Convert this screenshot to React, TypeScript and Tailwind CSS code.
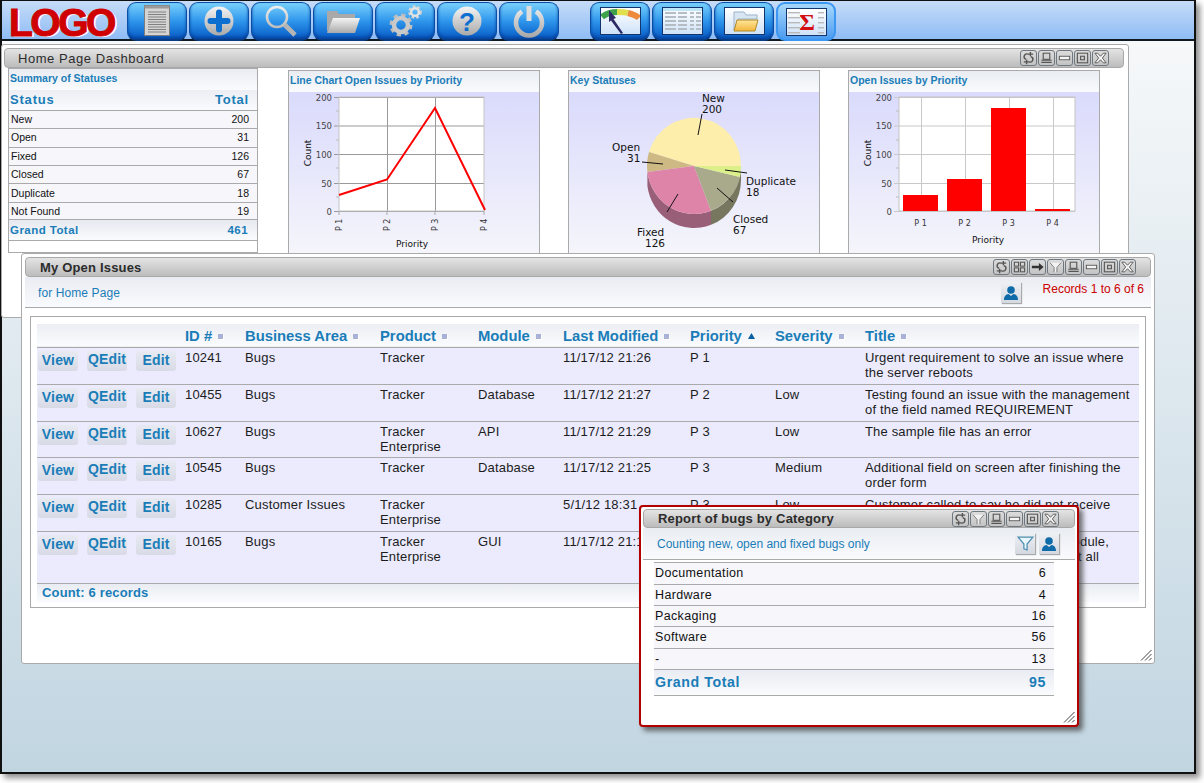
import type { ReactNode } from "react";

const ARIAL = "font-['Liberation_Sans',Arial,sans-serif]";

function SharedDefs() {
  return (
    <svg className="absolute h-0 w-0" aria-hidden="true">
      <defs>
        <linearGradient id="chrome" x1="0" y1="0" x2="0" y2="1">
          <stop offset="0" stopColor="#f4f4f4" />
          <stop offset="1" stopColor="#a9a9a9" />
        </linearGradient>
        <linearGradient id="chromeFlat" gradientUnits="userSpaceOnUse" x1="0" y1="0" x2="0" y2="34">
          <stop offset="0" stopColor="#f4f4f4" />
          <stop offset="1" stopColor="#a5a5a5" />
        </linearGradient>
        <linearGradient id="folderYellow" x1="0" y1="0" x2="0" y2="1">
          <stop offset="0" stopColor="#ffe79a" />
          <stop offset="1" stopColor="#f2b63c" />
        </linearGradient>
      </defs>
    </svg>
  );
}

function DocIcon() {
  return (
    <svg width="36" height="34" viewBox="0 0 36 34">
      <rect x="5.5" y="1.5" width="25" height="30" fill="#d4d4d4" stroke="#7d7d7d" />
      <rect x="5.5" y="1.5" width="25" height="3" fill="#9a9a9a" />
      {[8, 10.5, 13, 15.5, 18, 20.5, 23, 25.5, 28].map((y) => (
        <line key={y} x1="9" x2="27" y1={y} y2={y} stroke="#808080" strokeWidth="1" />
      ))}
    </svg>
  );
}

function PlusIcon() {
  return (
    <svg width="36" height="34" viewBox="0 0 36 34">
      <circle cx="18" cy="17" r="14.5" fill="url(#chrome)" />
      <path d="M18 8.500v17M9.500 17h17" stroke="#0d6fd0" strokeWidth="6" strokeLinecap="round" />
    </svg>
  );
}

function SearchIcon() {
  return (
    <svg width="36" height="34" viewBox="0 0 36 34">
      <circle cx="14" cy="13" r="10" fill="none" stroke="url(#chromeFlat)" strokeWidth="2.6" />
      <line x1="21.5" y1="20.5" x2="32" y2="31" stroke="#b5b5b5" strokeWidth="4.6" />
    </svg>
  );
}

function FolderIcon() {
  return (
    <svg width="36" height="34" viewBox="0 0 36 34">
      <path d="M2 28V7h10l2 3h16v4H9z" fill="#a9a9a9" />
      <path d="M2 29l6-15h27l-5 15z" fill="url(#chrome)" />
    </svg>
  );
}

function GearsIcon() {
  return (
    <svg width="36" height="34" viewBox="0 0 36 34">
      <circle cx="14" cy="21" r="9.500" fill="none" stroke="#bdbdbd" strokeWidth="4" strokeDasharray="4 3.450" />
      <circle cx="14" cy="21" r="7" fill="none" stroke="#c9c9c9" strokeWidth="4.500" />
      <circle cx="28" cy="8" r="5.500" fill="none" stroke="#d6d6d6" strokeWidth="2.600" strokeDasharray="2.600 2" />
      <circle cx="28" cy="8" r="3.800" fill="none" stroke="#e4e4e4" strokeWidth="2.400" />
    </svg>
  );
}

function HelpIcon() {
  return (
    <svg width="36" height="34" viewBox="0 0 36 34">
      <circle cx="18" cy="17" r="14.5" fill="url(#chrome)" />
      <text x="18" y="26.500" textAnchor="middle" fontFamily="'Liberation Sans',sans-serif" fontWeight="700" fontSize="26" fill="#0d6fd0">
        ?
      </text>
    </svg>
  );
}

function PowerIcon() {
  return (
    <svg width="36" height="34" viewBox="0 0 36 34">
      <path d="M11 7.500a13 13 0 1 0 14 0" fill="none" stroke="url(#chromeFlat)" strokeWidth="4.600" />
      <rect x="15.500" y="2" width="5" height="15" fill="#ddd" />
    </svg>
  );
}

function GaugeIcon() {
  return (
    <svg width="39" height="26" viewBox="0 0 39 26">
      <path d="M1 9C6 5 11 4 16 4" fill="none" stroke="#3fa24a" strokeWidth="6" />
      <path d="M16 4c4 0 8 0 11 1" fill="none" stroke="#dfe04c" strokeWidth="6" />
      <path d="M27 5c4 1 8 2 11 5" fill="none" stroke="#ee8a3c" strokeWidth="6" />
      <path d="M8 2l7 8-2.500 1L22 25l-2 1-10-13.500-2 1.500z" fill="#2d2a66" />
    </svg>
  );
}

function GridIcon() {
  const rows = [3, 7, 11, 15, 19];
  return (
    <svg width="39" height="26" viewBox="0 0 39 26">
      <rect x="0" y="0" width="39" height="3" fill="#bfe6f6" />
      {rows.map((y) => (
        <g key={y} fill="#b4bcc4">
          <rect x="2" y={y + 1} width="11" height="2" />
          <rect x="15" y={y + 1} width="9" height="2" />
          <rect x="27" y={y + 1} width="4" height="2" />
          <rect x="33" y={y + 1} width="5" height="2" />
        </g>
      ))}
    </svg>
  );
}

function YellowFolderIcon() {
  return (
    <svg width="39" height="26" viewBox="0 0 39 26">
      <path d="M9 22V4h10l2 3h11v4H13z" fill="#d8e6f4" stroke="#9db4c8" />
      <path d="M9 23l3-11h21l-3 11z" fill="url(#folderYellow)" stroke="#b08a2a" />
    </svg>
  );
}

function SigmaIcon() {
  return (
    <svg width="39" height="26" viewBox="0 0 39 26">
      {[3, 8, 13, 18, 23].map((y) => (
        <g key={y}>
          <rect x="1" y={y} width="12" height="1.400" fill="#b9b9b9" />
          <rect x="31" y={y} width="6" height="1.400" fill="#b9b9b9" />
        </g>
      ))}
      <text x="20" y="21" textAnchor="middle" fontFamily="'Liberation Serif',serif" fontWeight="700" fontSize="24" fill="#d40d12">
        Σ
      </text>
    </svg>
  );
}

function ToolButton({ children, active }: { children: ReactNode; active?: boolean }) {
  return (
    <div
      className={
        active
          ? "flex h-[39px] w-[60px] items-center justify-center rounded-[9px] border-2 border-[#3b97f2] bg-gradient-to-b from-[#a6d8fb] to-[#4a9bf0]"
          : "flex h-[39px] w-[60px] items-center justify-center rounded-[9px] border border-b-2 border-[#0a4ea6] border-b-[#083d86] bg-gradient-to-b from-[#77d0fb] via-[#2e96ec] to-[#0759c4] shadow-[inset_0_-2px_3px_#07459f]"
      }
    >
      {children}
    </div>
  );
}

function FramedIcon({ children }: { children: ReactNode }) {
  return (
    <div className="flex h-[28px] w-[41px] items-center justify-center border border-[#14356b] bg-gradient-to-b from-white to-[#cfe2f8]">
      {children}
    </div>
  );
}

function Toolbar() {
  return (
    <header className="flex h-[40px] shrink-0 items-start border-b-2 border-[#101820] bg-gradient-to-b from-[#c6dcf8] to-[#8fbcf5] pl-[7px] pt-[1px]">
      <div className={`${ARIAL} mt-[1px] w-[115px] text-[39px] leading-[39px] font-bold tracking-[-2.500px] whitespace-nowrap text-[#d00000] [-webkit-text-stroke:1px_#d00000] [text-shadow:2px_1px_0_#fff]`}>
        LOGO
      </div>
      <div className="ml-[3px] flex gap-[2px]">
        <ToolButton><DocIcon /></ToolButton>
        <ToolButton><PlusIcon /></ToolButton>
        <ToolButton><SearchIcon /></ToolButton>
        <ToolButton><FolderIcon /></ToolButton>
        <ToolButton><GearsIcon /></ToolButton>
        <ToolButton><HelpIcon /></ToolButton>
        <ToolButton><PowerIcon /></ToolButton>
      </div>
      <div className="ml-[31px] flex gap-[2px]">
        <ToolButton><FramedIcon><GaugeIcon /></FramedIcon></ToolButton>
        <ToolButton><FramedIcon><GridIcon /></FramedIcon></ToolButton>
        <ToolButton><FramedIcon><YellowFolderIcon /></FramedIcon></ToolButton>
        <ToolButton active><FramedIcon><SigmaIcon /></FramedIcon></ToolButton>
      </div>
    </header>
  );
}

type WinIcon = "refresh" | "grid" | "arrow" | "filter" | "print" | "min" | "max" | "close";

function WinGlyph({ name }: { name: WinIcon }) {
  const stroke = "#555";
  switch (name) {
    case "refresh":
      return (
        <g fill="none" stroke={stroke} strokeWidth="1.500">
          <path d="M13 3.500H7.500a3 3 0 0 0-2 6" />
          <path d="M3 12.500h5.500a3 3 0 0 0 2-6" />
          <path d="M10 1v5M6 10v5" />
        </g>
      );
    case "grid":
      return (
        <g fill="none" stroke={stroke} strokeWidth="1.200">
          <rect x="2.500" y="2.500" width="4.500" height="4.500" />
          <rect x="9" y="2.500" width="4.500" height="4.500" />
          <rect x="2.500" y="9" width="4.500" height="4.500" />
          <rect x="9" y="9" width="4.500" height="4.500" />
        </g>
      );
    case "arrow":
      return <path d="M2 6.500h7.500V3.500L14.500 8l-5 4.500v-3H2z" fill="#333" />;
    case "filter":
      return (
        <g>
          <path d="M2 3h12L9.500 8.500V14h-3V8.500z" fill="#f2f2f2" />
          <path d="M2 3l4.500 5.500V14M14 3L9.500 8.500V14" fill="none" stroke="#777" />
        </g>
      );
    case "print":
      return (
        <g fill="none" stroke={stroke} strokeWidth="1.200">
          <rect x="4.500" y="2.500" width="7" height="7" />
          <path d="M2.500 10.500h11M2.500 13h11" />
        </g>
      );
    case "min":
      return <rect x="2.500" y="6" width="11" height="4" fill="#f4f4f4" stroke={stroke} strokeWidth="1" />;
    case "max":
      return (
        <g fill="none" stroke={stroke} strokeWidth="1.200">
          <rect x="2.500" y="2.500" width="11" height="11" />
          <rect x="6" y="6" width="4" height="4" />
        </g>
      );
    case "close":
      return (
        <path d="M2 2.500h3L8 6l3-3.500h3L10 8l4 5.500h-3L8 10l-3 3.500H2L6 8z" fill="#f4f4f4" stroke={stroke} strokeWidth="1" />
      );
  }
}

function WinButton({ name }: { name: WinIcon }) {
  return (
    <div className="h-[16px] w-[17px] rounded-[3px] border border-[#6f7880] bg-gradient-to-b from-[#dcdcdc] to-[#c4c4c4]">
      <svg width="15" height="14" viewBox="0 0 16 16" preserveAspectRatio="none">
        <WinGlyph name={name} />
      </svg>
    </div>
  );
}

function TitleBar({ title, bold, icons, right }: { title: string; bold?: boolean; icons: WinIcon[]; right: string }) {
  return (
    <div className={`flex items-center rounded-[4px] border border-[#a8a8a8] bg-gradient-to-b from-[#e4e4e4] to-[#bcbcbc] ${right}`}>
      <span className={`${ARIAL} flex-1 text-[13px] leading-[15px] text-[#2c2c2c] ${bold ? "font-bold tracking-[0.18px]" : "font-normal tracking-[0.55px]"}`}>
        {title}
      </span>
      <div className="flex gap-px">
        {icons.map((n) => (
          <WinButton key={n} name={n} />
        ))}
      </div>
    </div>
  );
}

function ResizeGrip() {
  return (
    <svg className="absolute right-[2px] bottom-[2px]" width="12" height="12" viewBox="0 0 12 12">
      <path d="M1 11.500L11.500 1M5 11.500L11.500 5M9 11.500L11.500 9" stroke="#444" strokeWidth="1" />
    </svg>
  );
}

function SortMark() {
  return <span className="ml-[6px] inline-block h-[5px] w-[5px] bg-[#a9b2d6] align-[2px] shadow-[1px_1px_0_#fff]" />;
}

function SortAsc() {
  return (
    <svg className="ml-[6px] inline-block align-[2px]" width="7" height="6" viewBox="0 0 7 6">
      <path d="M3.500 0L7 6H0z" fill="#0b5f9e" />
    </svg>
  );
}

function FilterTile() {
  return (
    <div className="flex h-[21px] w-[20px] items-center justify-center bg-gradient-to-b from-[#eef0f4] to-[#d4d8e0] shadow-[1px_1px_1px_#aaa]">
      <svg width="17" height="17" viewBox="0 0 16 16">
        <path d="M1 2h14L9.500 8.500V14l-3-1V8.500z" fill="#e9f6fb" stroke="#4f8fb0" strokeWidth="1.200" />
      </svg>
    </div>
  );
}

function UserTile() {
  return (
    <div className="flex h-[21px] w-[20px] items-center justify-center bg-gradient-to-b from-[#eef0f4] to-[#d4d8e0] shadow-[1px_1px_1px_#aaa]">
      <svg width="16" height="16" viewBox="0 0 16 16">
        <circle cx="8" cy="5" r="3.800" fill="#0e6aa8" />
        <path d="M1 15c0-4 2-5.500 4.500-6L8 11l2.500-2c2.500.5 4.500 2 4.500 6z" fill="#0e6aa8" />
      </svg>
    </div>
  );
}

const summaryRows: [string, number, string][] = [
  ["New", 200, "h-[18px]"],
  ["Open", 31, "h-[19px]"],
  ["Fixed", 126, "h-[18px]"],
  ["Closed", 67, "h-[18px]"],
  ["Duplicate", 18, "h-[19px] pt-[1px]"],
  ["Not Found", 19, "h-[17px] pt-[1px]"],
];

function SummaryPanel() {
  return (
    <div className={`${ARIAL} h-[185px] w-[250px] shrink-0 border border-[#aaa] bg-white`}>
      <div className="flex h-[21px] items-center bg-gradient-to-b from-[#e9ecf2] to-[#fafbfd] pb-[2px] pl-[1px] text-[10.500px] font-bold text-[#1a7db8]">
        Summary of Statuses
      </div>
      <div className="flex h-[21px] items-center justify-between border-b border-[#aaa] bg-gradient-to-b from-[#eceef4] to-[#fafbfd] pr-[8px] pl-[1px] text-[13px] font-bold tracking-[0.8px] text-[#1a7db8]">
        <span>Status</span>
        <span>Total</span>
      </div>
      {summaryRows.map(([label, n, h]) => (
        <div key={label} className={`flex ${h} items-center justify-between border-b border-[#aaa] bg-[#f6f6fb] pr-[8px] pl-[2px] text-[10.500px] text-[#111]`}>
          <span>{label}</span>
          <span>{n}</span>
        </div>
      ))}
      <div className="flex h-[21px] items-center justify-between border-b border-[#aaa] bg-gradient-to-b from-[#e6e9f0] to-[#fafbfd] pt-[2px] pr-[9px] pl-[1px] text-[11.500px] font-bold tracking-[0.45px] text-[#1a7db8]">
        <span>Grand Total</span>
        <span>461</span>
      </div>
    </div>
  );
}

function ChartPanel({ title, children }: { title: string; children: ReactNode }) {
  return (
    <div className={`${ARIAL} mt-[2px] h-[183px] w-[252px] shrink-0 border border-[#aaa]`}>
      <div className="flex h-[21px] items-center bg-gradient-to-b from-[#e9ecf2] to-[#fafbfd] pb-[2px] pl-[1px] text-[10.500px] font-bold text-[#1a7db8]">
        {title}
      </div>
      <div className="h-[161px] bg-gradient-to-b from-[#dadafc] to-[#f5f5fb]">{children}</div>
    </div>
  );
}

const axisFont = "'DejaVu Sans',sans-serif";

function Axes({ left, right, vlines, grid }: { left: number; right: number; vlines: number[]; grid: string }) {
  const ys: [number, string][] = [[97, "200"], [125.5, "150"], [154, "100"], [183, "50"], [211, "0"]];
  return (
    <g>
      <rect x={left} y="97" width={right - left} height="114" fill="#fff" />
      {ys.map(([y, t]) => (
        <g key={t}>
          <line x1={left - 5} x2={right} y1={y + 0.5} y2={y + 0.5} stroke={grid} />
          <text x={left - 7} y={y + 3.5} textAnchor="end" fontFamily={axisFont} fontSize="8.500" fill="#444">
            {t}
          </text>
        </g>
      ))}
      {[111, 140, 168, 197].map((y) => (
        <line key={y} x1={left - 3} x2={left} y1={y} y2={y} stroke="#bbb" />
      ))}
      {vlines.map((x) => (
        <line key={x} x1={x + 0.5} x2={x + 0.5} y1="97" y2="211" stroke={grid} />
      ))}
      <rect x={left} y="97" width={right - left} height="114" fill="none" stroke="#c4c4c4" />
      <text transform={`translate(${left - 28},153) rotate(-90)`} textAnchor="middle" fontFamily={axisFont} fontSize="9" fill="#111">
        Count
      </text>
    </g>
  );
}

function LineChart() {
  return (
    <svg width="250" height="161" viewBox="289 92 250 161">
      <Axes left={339} right={484} vlines={[387, 435]} grid="#999" />
      {[339, 387, 435, 484].map((x, i) => (
        <g key={x}>
          <line x1={x} x2={x} y1="211" y2="215" stroke="#aaa" />
          <text transform={`translate(${x + 3},231) rotate(-90)`} fontFamily={axisFont} fontSize="8" fill="#333">
            {`P ${i + 1}`}
          </text>
        </g>
      ))}
      <polyline points="339,195 387,179.500 435,108 485,210" fill="none" stroke="#f00" strokeWidth="2" />
      <text x="412" y="247" textAnchor="middle" fontFamily={axisFont} fontSize="9" fill="#111">
        Priority
      </text>
    </svg>
  );
}

function BarChart() {
  const bars = [[903, 195], [947, 179], [991, 108], [1035, 209]];
  return (
    <svg width="250" height="161" viewBox="849 92 250 161">
      <Axes left={899} right={1075} vlines={[921, 965, 1009, 1053]} grid="#c8c8c8" />
      {bars.map(([x, y], i) => (
        <g key={x}>
          <rect x={x} y={y} width="35" height={211 - y} fill="#f00" />
          <text x={x + 17.5} y="226" textAnchor="middle" fontFamily={axisFont} fontSize="8" fill="#333">
            {`P ${i + 1}`}
          </text>
        </g>
      ))}
      <text x="988" y="243" textAnchor="middle" fontFamily={axisFont} fontSize="9" fill="#111">
        Priority
      </text>
    </svg>
  );
}

function PieChart() {
  const label = { fontFamily: axisFont, fontSize: 10.5, fill: "#111" };
  return (
    <svg width="250" height="161" viewBox="569 92 250 161">
      <path d="M647.400 172A47 48 0 0 0 711 210.800V224.800A47 48 0 0 1 647.400 186z" fill="#9a5f78" />
      <path d="M711 210.800A47 48 0 0 0 741 166V180A47 48 0 0 1 711 224.800z" fill="#77775f" />
      <path d="M694 166L741 166A47 48 0 0 0 649 152z" fill="#fdeeab" />
      <path d="M694 166L649 152A47 48 0 0 0 647.400 172z" fill="#ceb985" />
      <path d="M694 166L647.400 172A47 48 0 0 0 711 210.800z" fill="#de84a9" />
      <path d="M694 166L711 210.800A47 48 0 0 0 740 177z" fill="#a9a98b" />
      <path d="M694 166L740 177A47 48 0 0 0 741 166z" fill="#dcf08a" />
      <g stroke="#111" strokeWidth="1" fill="none">
        <path d="M702 114l-4 21" />
        <path d="M642 162l21 2" />
        <path d="M725 170l22 3" />
        <path d="M717 188l16 14" />
        <path d="M678 194l-11 18" />
      </g>
      <text x="702" y="102" {...label}>New</text>
      <text x="702" y="113" {...label}>200</text>
      <text x="612" y="151" {...label}>Open</text>
      <text x="627" y="162" {...label}>31</text>
      <text x="746" y="185" {...label}>Duplicate</text>
      <text x="746" y="196" {...label}>18</text>
      <text x="733" y="223" {...label}>Closed</text>
      <text x="733" y="234" {...label}>67</text>
      <text x="637" y="236" {...label}>Fixed</text>
      <text x="645" y="247" {...label}>126</text>
    </svg>
  );
}

type Issue = {
  id: string;
  area: string;
  product: string;
  module: string;
  modified: string;
  priority: string;
  severity: string;
  title: ReactNode;
  h: string;
};

const issues: Issue[] = [
  { id: "10241", area: "Bugs", product: "Tracker", module: "", modified: "11/17/12 21:26", priority: "P 1", severity: "", title: "Urgent requirement to solve an issue where the server reboots", h: "h-[37px]" },
  { id: "10455", area: "Bugs", product: "Tracker", module: "Database", modified: "11/17/12 21:27", priority: "P 2", severity: "Low", title: "Testing found an issue with the management of the field named REQUIREMENT", h: "h-[37px]" },
  { id: "10627", area: "Bugs", product: "Tracker Enterprise", module: "API", modified: "11/17/12 21:29", priority: "P 3", severity: "Low", title: "The sample file has an error", h: "h-[36px]" },
  { id: "10545", area: "Bugs", product: "Tracker", module: "Database", modified: "11/17/12 21:25", priority: "P 3", severity: "Medium", title: "Additional field on screen after finishing the order form", h: "h-[37px]" },
  { id: "10285", area: "Customer Issues", product: "Tracker Enterprise", module: "", modified: "5/1/12 18:31", priority: "P 3", severity: "Low", title: "Customer called to say he did not receive", h: "h-[37px]" },
  { id: "10165", area: "Bugs", product: "Tracker Enterprise", module: "GUI", modified: "11/17/12 21:18", priority: "", severity: "", title: <>Window freezes when opening a module,<br />and the user must restart to review it all</>, h: "h-[52px]" },
];

const cols = ["w-[148px]", "w-[60px]", "w-[135px]", "w-[98px]", "w-[85px]", "w-[127px]", "w-[85px]", "w-[90px]", "w-[274px]"];

function ActionButton({ label, className }: { label: string; className?: string }) {
  return (
    <span className={`flex h-[20px] w-[40px] items-center justify-center rounded-[3px] bg-gradient-to-b from-[#e8eaf2] to-[#d8dbe6] text-[14px] font-bold tracking-[0.15px] text-[#1a7db8] ${className ?? ""}`}>
      {label}
    </span>
  );
}

function HeadCell({ label, mark }: { label: string; mark: ReactNode }) {
  return (
    <th className="p-0 pt-[2px] text-left text-[14.800px] leading-none font-bold whitespace-nowrap text-[#1a7db8]">
      {label}
      {mark}
    </th>
  );
}

function IssuesTable() {
  return (
    <div className={`${ARIAL} mx-[8px] mt-[8px] h-[292px] border border-[#aaa] bg-white px-[6px] pt-[7px]`}>
      <table className="w-[1102px] table-fixed border-collapse">
        <colgroup>
          {cols.map((c, i) => (
            <col key={i} className={c} />
          ))}
        </colgroup>
        <thead>
          <tr className="h-[23px] border-b border-[#aaa] bg-gradient-to-b from-[#eceef4] to-[#fafbfd]">
            <th />
            <HeadCell label="ID #" mark={<SortMark />} />
            <HeadCell label="Business Area" mark={<SortMark />} />
            <HeadCell label="Product" mark={<SortMark />} />
            <HeadCell label="Module" mark={<SortMark />} />
            <HeadCell label="Last Modified" mark={<SortMark />} />
            <HeadCell label="Priority" mark={<SortAsc />} />
            <HeadCell label="Severity" mark={<SortMark />} />
            <HeadCell label="Title" mark={<SortMark />} />
          </tr>
        </thead>
        <tbody>
          {issues.map((r) => (
            <tr key={r.id} className={`${r.h} border-b border-[#aaa] bg-[#ebebfd] align-top text-[13px] leading-[15.500px] tracking-[0.17px] text-[#1c1c1c]`}>
              <td className="p-0 pt-[3px] pl-[1px]">
                <div className="flex gap-[9px]">
                  <ActionButton label="View" />
                  <ActionButton label="QEdit" className="pb-[2px]" />
                  <ActionButton label="Edit" />
                </div>
              </td>
              <td className="p-0 pt-[2px]">{r.id}</td>
              <td className="p-0 pt-[2px]">{r.area}</td>
              <td className="p-0 pt-[2px]">{r.product}</td>
              <td className="p-0 pt-[2px]">{r.module}</td>
              <td className="p-0 pt-[2px]">{r.modified}</td>
              <td className="p-0 pt-[2px]">{r.priority}</td>
              <td className="p-0 pt-[2px]">{r.severity}</td>
              <td className="p-0 pt-[2px]">{r.title}</td>
            </tr>
          ))}
        </tbody>
      </table>
      <div className="flex h-[18px] w-[1102px] items-center bg-gradient-to-b from-[#e9ecf2] to-[#fafbfd] pl-[5px] text-[13px] font-bold tracking-[0.15px] text-[#1a7db8]">
        Count: 6 records
      </div>
    </div>
  );
}

const reportRows: [string, number, string][] = [
  ["Documentation", 6, "h-[22px]"],
  ["Hardware", 4, "h-[21px]"],
  ["Packaging", 16, "h-[21px]"],
  ["Software", 56, "h-[22px]"],
  ["-", 13, "h-[21px]"],
];

function ReportWindow() {
  return (
    <section className={`${ARIAL} absolute top-[505px] left-[639px] h-[222px] w-[440px] rounded-[4px] border-[2px] border-[#b00000] bg-white p-[2px] shadow-[4px_4px_5px_rgba(60,60,60,0.7)]`}>
      <TitleBar title="Report of bugs by Category" bold icons={["refresh", "filter", "print", "min", "max", "close"]} right="h-[19px] pr-[15px] pl-[14px]" />
      <div className="flex h-[32px] items-center justify-between border-b border-[#aaa] bg-gradient-to-b from-[#e9ecf2] to-[#fafbfd] pr-[16px] pl-[14px]">
        <span className="text-[12px] text-[#1a7db8]">Counting new, open and fixed bugs only</span>
        <div className="flex gap-[4px]">
          <FilterTile />
          <UserTile />
        </div>
      </div>
      <div className="mt-[2px] ml-[11px] w-[400px] border-t border-[#aaa]">
        {reportRows.map(([label, n, h]) => (
          <div key={label} className={`flex ${h} items-center justify-between border-b border-[#aaa] bg-[#f6f6fb] pr-[8px] pl-[1px] text-[12.500px] tracking-[0.35px] text-[#111]`}>
            <span>{label}</span>
            <span>{n}</span>
          </div>
        ))}
        <div className="flex h-[26px] items-center justify-between border-b border-[#aaa] bg-gradient-to-b from-[#e9ecf2] to-[#fafbfd] pr-[8px] pl-[1px] text-[14.200px] font-bold tracking-[0.6px] text-[#1a7db8]">
          <span>Grand Total</span>
          <span>95</span>
        </div>
      </div>
      <ResizeGrip />
    </section>
  );
}

export default function App() {
  return (
    <div className="relative h-[783px] w-[1204px] overflow-hidden bg-white">
      <SharedDefs />
      <div className="relative flex h-[774px] w-[1196px] flex-col border-2 border-t border-[#101010] bg-gradient-to-b from-[#f9fafb] to-[#c1d5e1] shadow-[4px_4px_6px_rgba(0,0,0,0.45)]">
        <Toolbar />
      </div>

      <section className="absolute top-[44px] left-[1px] h-[274px] w-[1128px] rounded-[3px] border border-[#aaa] bg-white px-[2px] pt-[3px]">
        <TitleBar title="Home Page Dashboard" icons={["refresh", "print", "min", "max", "close"]} right="h-[20px] w-[1120px] pr-[14px] pl-[13px]" />
        <div className="flex pl-[4px]">
          <SummaryPanel />
          <div className="ml-[30px]">
            <ChartPanel title="Line Chart Open Issues by Priority"><LineChart /></ChartPanel>
          </div>
          <div className="ml-[28px]">
            <ChartPanel title="Key Statuses"><PieChart /></ChartPanel>
          </div>
          <div className="ml-[28px]">
            <ChartPanel title="Open Issues by Priority"><BarChart /></ChartPanel>
          </div>
        </div>
      </section>

      <section className={`${ARIAL} absolute top-[253px] left-[21px] h-[411px] w-[1134px] rounded-[3px] border border-[#aaa] bg-white px-[3px] pt-[3px]`}>
        <TitleBar title="My Open Issues" bold icons={["refresh", "grid", "arrow", "filter", "print", "min", "max", "close"]} right="h-[20px] pr-[14px] pl-[14px]" />
        <div className="flex h-[31px] items-start justify-between border-b border-[#aaa] bg-gradient-to-b from-[#e9ecf2] to-[#fafbfd] pt-[5px] pr-[7px] pl-[13px]">
          <span className="mt-[2px] text-[12px] tracking-[0.1px] text-[#1a7db8]">for Home Page</span>
          <div className="flex items-start gap-[22px]">
            <UserTile />
            <span className="-mt-[2px] text-[12px] text-[#cc0000]">Records 1 to 6 of 6</span>
          </div>
        </div>
        <div className="-mx-[3px] px-0">
          <IssuesTable />
        </div>
        <ResizeGrip />
      </section>

      <ReportWindow />
    </div>
  );
}
